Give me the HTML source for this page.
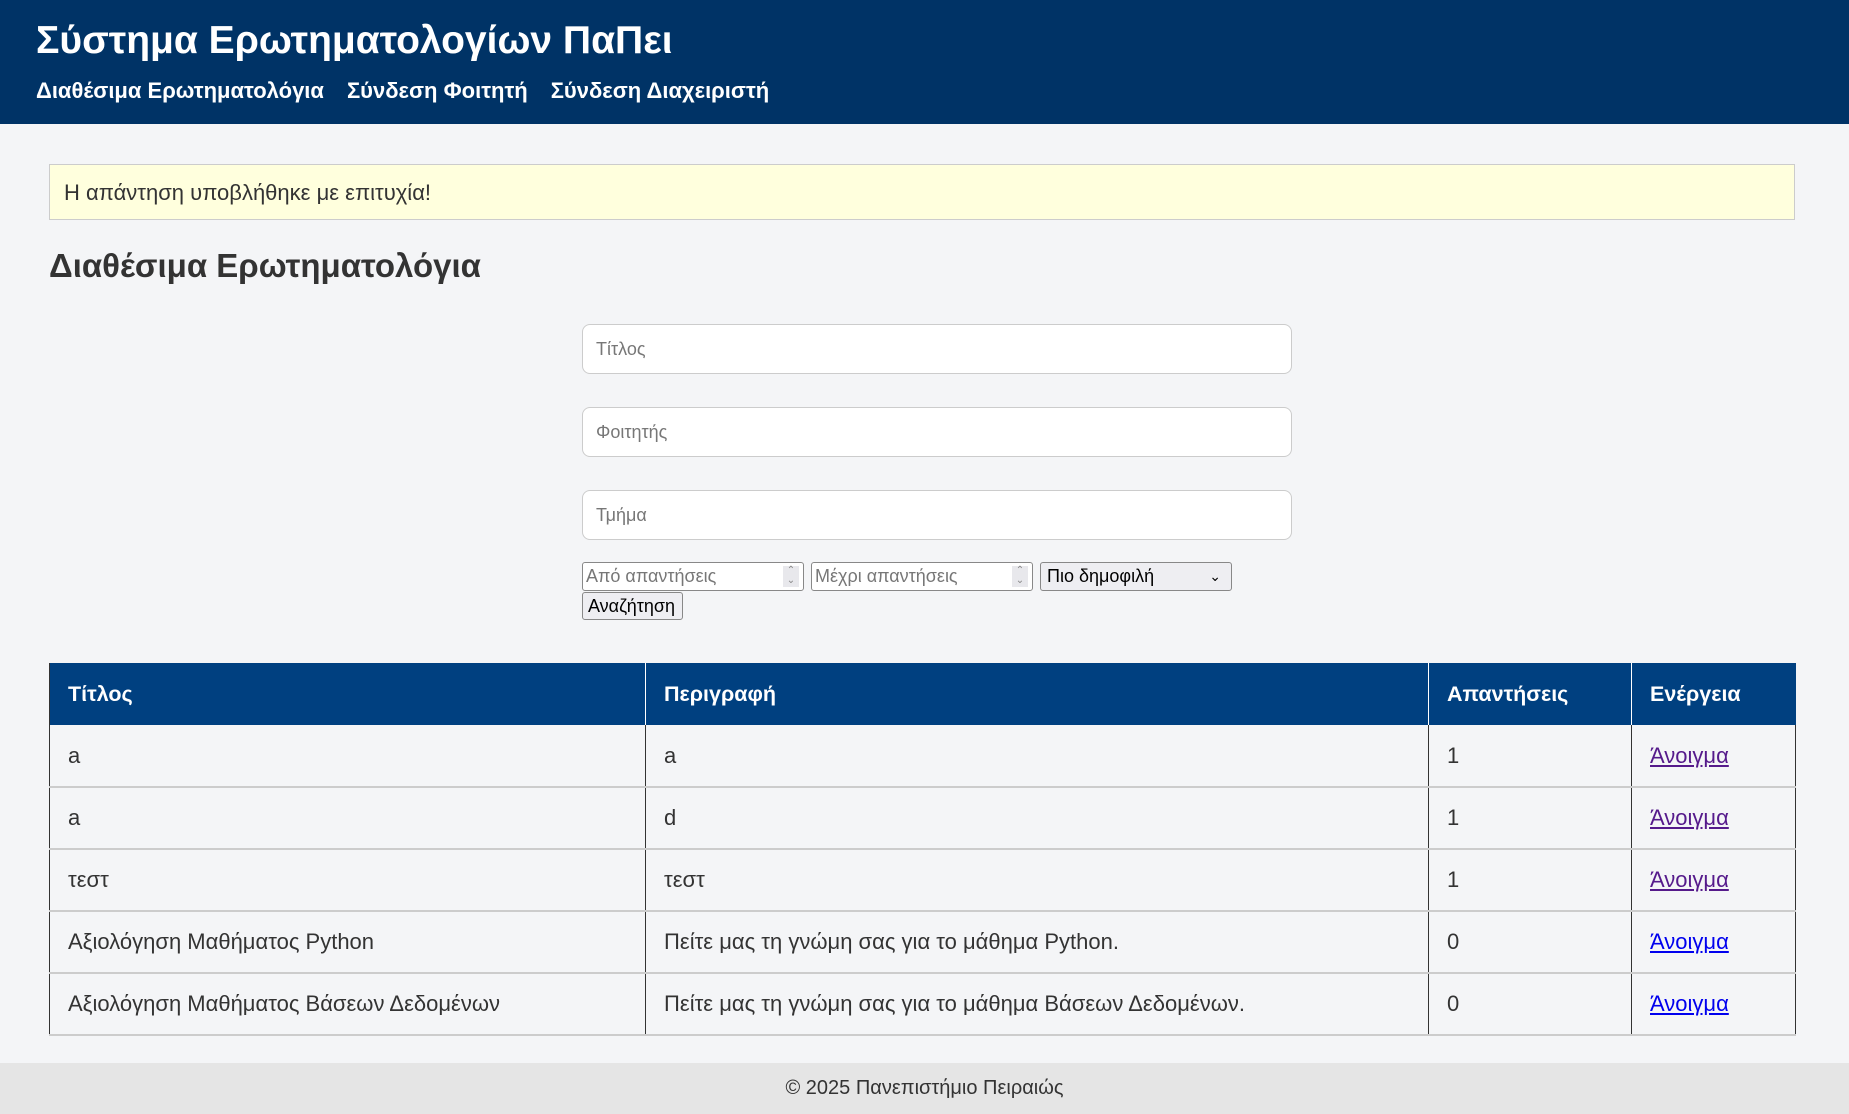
<!DOCTYPE html>
<html><head><meta charset="utf-8"><style>
*{box-sizing:border-box}
body{margin:0;background:#f4f5f7;font-family:"Liberation Sans",sans-serif;color:#333;width:1849px;height:1114px;position:relative;overflow:hidden}
header{position:absolute;left:0;top:0;width:1849px;height:124px;background:#003366;color:#fff}
header h1{position:absolute;left:36px;top:19px;margin:0;font-size:39px;font-weight:bold}
header nav{position:absolute;left:36px;top:78px;font-size:22px;font-weight:bold}
header nav span{margin-right:23px}
.alert{position:absolute;left:49px;top:164px;width:1746px;height:56px;background:#ffffdd;border:1px solid #ccc;font-size:22px;padding-left:14px;line-height:56px}
h2{position:absolute;left:49px;top:247px;margin:0;font-size:33px;font-weight:bold}
.in{position:absolute;left:582px;width:710px;height:50px;border:1px solid #ccc;border-radius:8px;background:#fff;font-size:18px;color:#777;padding-left:13px;line-height:48px}
.sm{position:absolute;top:562px;height:29px;border:1px solid #888;border-radius:3px;background:#fff;font-size:18px;color:#777;padding-left:3px;line-height:27px}
.sp{position:absolute;right:4px;top:3px;width:16px;height:21px;background:#e8e8ec;color:#888;font-size:10px;text-align:center;line-height:10px}
table{position:absolute;left:49px;top:663px;width:1747px;border-collapse:collapse;font-size:22px}
th{background:#004080;color:#fff;text-align:left;height:62px;padding:0 18px;border-left:1px solid #fff;font-weight:bold;font-size:21.5px}
th:first-child{border-left:1px solid #333}
td{height:62px;padding:0 18px;border-left:1px solid #333;border-right:1px solid #333;border-bottom:2px solid #ccc}
a{text-decoration:underline}
footer{position:absolute;left:0;top:1063px;width:1849px;height:51px;background:#e5e5e5;text-align:center;font-size:20px;line-height:51px}
</style></head><body>
<header><h1>Σύστημα Ερωτηματολογίων ΠαΠει</h1>
<nav><span>Διαθέσιμα Ερωτηματολόγια</span><span>Σύνδεση Φοιτητή</span><span>Σύνδεση Διαχειριστή</span></nav></header>
<div class="alert">Η απάντηση υποβλήθηκε με επιτυχία!</div>
<h2>Διαθέσιμα Ερωτηματολόγια</h2>
<div class="in" style="top:324px">Τίτλος</div>
<div class="in" style="top:407px">Φοιτητής</div>
<div class="in" style="top:490px">Τμήμα</div>
<div class="sm" style="left:582px;width:222px">Από απαντήσεις<div class="sp">⌃<br>⌄</div></div>
<div class="sm" style="left:811px;width:222px">Μέχρι απαντήσεις<div class="sp">⌃<br>⌄</div></div>
<div class="sm" style="left:1040px;width:192px;background:#eeeef2;color:#000;padding-left:6px">Πιο δημοφιλή<span style="position:absolute;right:10px;font-size:14px">⌄</span></div>
<div class="sm" style="left:582px;top:592px;width:101px;height:28px;background:#eeeef2;color:#000;padding-left:5px;line-height:26px">Αναζήτηση</div>
<table>
<tr><th style="width:596px">Τίτλος</th><th style="width:783px">Περιγραφή</th><th style="width:203px">Απαντήσεις</th><th>Ενέργεια</th></tr>
<tr><td>a</td><td>a</td><td>1</td><td><a style="color:#551a8b">Άνοιγμα</a></td></tr>
<tr><td>a</td><td>d</td><td>1</td><td><a style="color:#551a8b">Άνοιγμα</a></td></tr>
<tr><td>τεστ</td><td>τεστ</td><td>1</td><td><a style="color:#551a8b">Άνοιγμα</a></td></tr>
<tr><td>Αξιολόγηση Μαθήματος Python</td><td>Πείτε μας τη γνώμη σας για το μάθημα Python.</td><td>0</td><td><a style="color:#0000ee">Άνοιγμα</a></td></tr>
<tr><td>Αξιολόγηση Μαθήματος Βάσεων Δεδομένων</td><td>Πείτε μας τη γνώμη σας για το μάθημα Βάσεων Δεδομένων.</td><td>0</td><td><a style="color:#0000ee">Άνοιγμα</a></td></tr>
</table>
<footer>© 2025 Πανεπιστήμιο Πειραιώς</footer>
</body></html>
